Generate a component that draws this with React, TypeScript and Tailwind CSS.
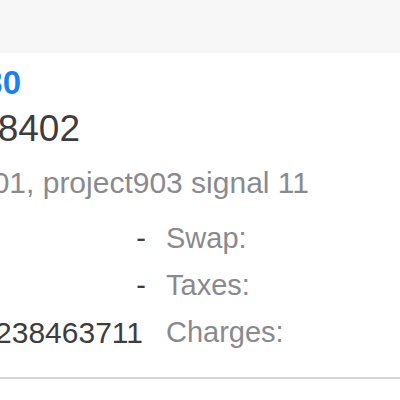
import React from 'react';

const rows = [
  { value: '-', label: 'Swap:', cell: 'text-[29px]' },
  { value: '-', label: 'Taxes:', cell: 'text-[29px]' },
  { value: '1238463711', label: 'Charges:', cell: 'text-[30px] pr-[3px]' },
];

export default function App() {
  return (
    <div className="w-[400px] h-[400px] overflow-hidden bg-white font-['Liberation_Sans',Arial,sans-serif]">
      {/* header strip */}
      <div className="h-[53px] bg-[#f7f7f7]" />

      <div className="pt-[13px]">
        {/* ticket number */}
        <div className="flex justify-end w-[21px] h-[33px]">
          <span className="whitespace-nowrap text-[33px] leading-none font-bold text-[#1a82f0]">#5173330</span>
        </div>

        {/* volume */}
        <div className="flex justify-end w-[80px] h-[37px] mt-[11px]">
          <span className="whitespace-nowrap text-[37px] leading-none text-[#3d3d3d]">1.38402</span>
        </div>

        {/* comment */}
        <div className="flex justify-end w-[309px] h-[30px] mt-[21px]">
          <span className="whitespace-nowrap text-[30px] leading-none text-[#8a8a8e]">2017.04.01, project903 signal 11</span>
        </div>

        {/* details */}
        <div className="mt-[17px] grid grid-cols-[146px_1fr] gap-x-[20px] auto-rows-[47px] items-center text-[29px] leading-none">
          {rows.map((r) => (
            <React.Fragment key={r.label}>
              <div className={`flex justify-end ${r.cell}`}>
                <span className="whitespace-nowrap text-[#3d3d3d]">{r.value}</span>
              </div>
              <span className="whitespace-nowrap text-[#8a8a8e]">{r.label}</span>
            </React.Fragment>
          ))}
        </div>

        <div className="mt-[21px] border-t-2 border-[#d4d4d4]" />
      </div>
    </div>
  );
}
